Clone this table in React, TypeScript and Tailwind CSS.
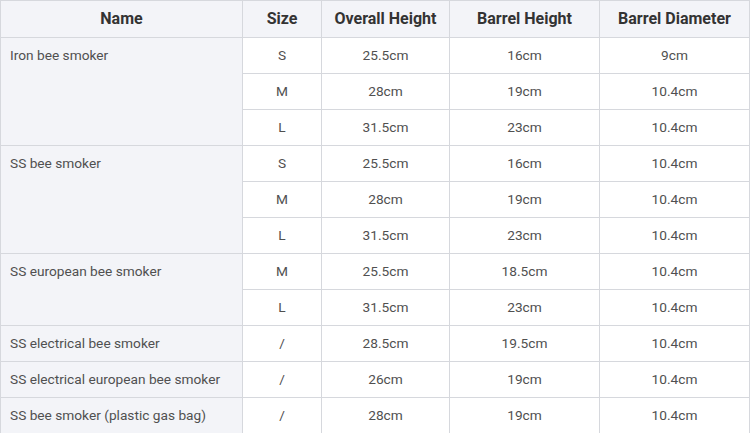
import React from 'react';

type Row = { size: string; overall: string; barrel: string; diameter: string };
type Group = { name: string; rows: Row[] };

const groups: Group[] = [
    {
        name: 'Iron bee smoker',
        rows: [
            { size: 'S', overall: '25.5cm', barrel: '16cm', diameter: '9cm' },
            { size: 'M', overall: '28cm', barrel: '19cm', diameter: '10.4cm' },
            { size: 'L', overall: '31.5cm', barrel: '23cm', diameter: '10.4cm' },
        ],
    },
    {
        name: 'SS bee smoker',
        rows: [
            { size: 'S', overall: '25.5cm', barrel: '16cm', diameter: '10.4cm' },
            { size: 'M', overall: '28cm', barrel: '19cm', diameter: '10.4cm' },
            { size: 'L', overall: '31.5cm', barrel: '23cm', diameter: '10.4cm' },
        ],
    },
    {
        name: 'SS european bee smoker',
        rows: [
            { size: 'M', overall: '25.5cm', barrel: '18.5cm', diameter: '10.4cm' },
            { size: 'L', overall: '31.5cm', barrel: '23cm', diameter: '10.4cm' },
        ],
    },
    { name: 'SS electrical bee smoker', rows: [{ size: '/', overall: '28.5cm', barrel: '19.5cm', diameter: '10.4cm' }] },
    { name: 'SS electrical european bee smoker', rows: [{ size: '/', overall: '26cm', barrel: '19cm', diameter: '10.4cm' }] },
    { name: 'SS bee smoker (plastic gas bag)', rows: [{ size: '/', overall: '28cm', barrel: '19cm', diameter: '10.4cm' }] },
];

const th = 'border border-[#d6d8dd] h-[37px] p-0 text-center text-[16px] font-bold text-[#333] leading-[20px]';
const td = 'border border-[#d6d8dd] h-[36px] p-0 pb-[2px] text-center align-middle';

export default function App() {
    return (
        <div className="w-[751px] h-[433px] overflow-hidden bg-white font-['Roboto',sans-serif]">
            <table className="border-collapse table-fixed w-[749px] text-[13.7px] text-[#505050] leading-[18px]">
                <colgroup>
                    <col className="w-[242px]" />
                    <col className="w-[79px]" />
                    <col className="w-[128px]" />
                    <col className="w-[150px]" />
                    <col className="w-[150px]" />
                </colgroup>
                <thead>
                    <tr className="bg-[#f3f4f8]">
                        <th className={th}>Name</th>
                        <th className={th}>Size</th>
                        <th className={th}>Overall Height</th>
                        <th className={th}>Barrel Height</th>
                        <th className={th}>Barrel Diameter</th>
                    </tr>
                </thead>
                <tbody>
                    {groups.map((g) =>
                        g.rows.map((r, i) => (
                            <tr key={g.name + i}>
                                {i === 0 && (
                                    <td
                                        rowSpan={g.rows.length}
                                        className="border border-[#d6d8dd] bg-[#f3f4f8] p-0 pl-[9px] pt-[8px] align-top text-left"
                                    >
                                        {g.name}
                                    </td>
                                )}
                                <td className={td}>{r.size}</td>
                                <td className={td}>{r.overall}</td>
                                <td className={td}>{r.barrel}</td>
                                <td className={td}>{r.diameter}</td>
                            </tr>
                        ))
                    )}
                </tbody>
            </table>
        </div>
    );
}
